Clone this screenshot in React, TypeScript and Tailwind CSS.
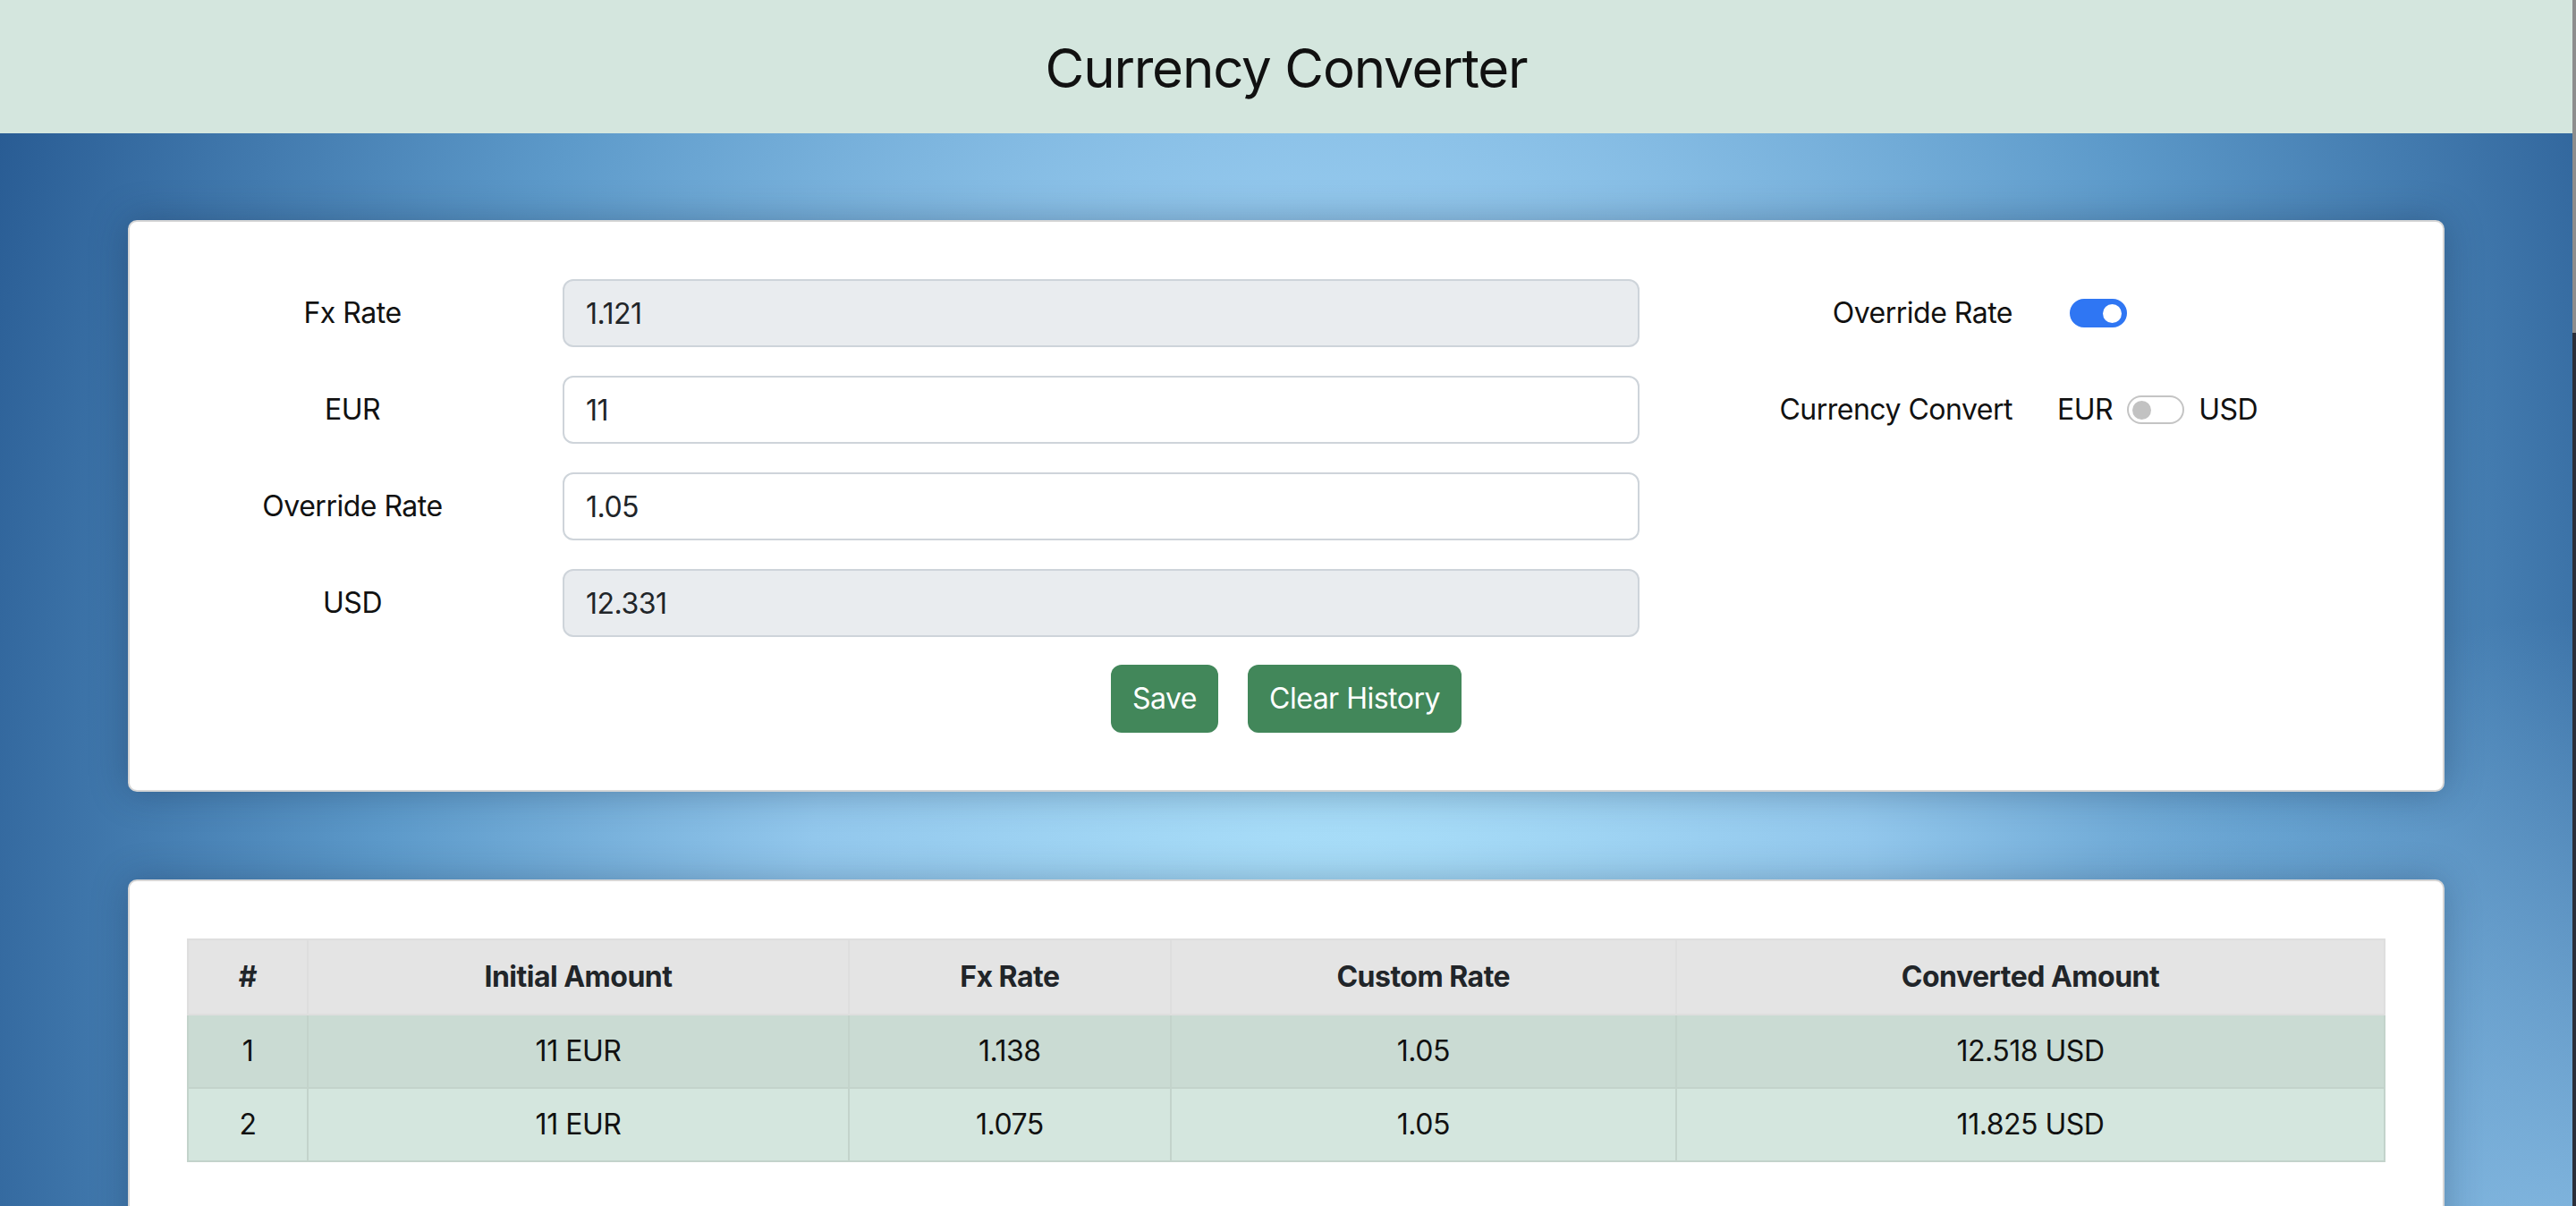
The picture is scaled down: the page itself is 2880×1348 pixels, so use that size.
import { useState } from 'react';

// ─── Data ─────────────────────────────────────────────────────────────────────

interface HistoryRow {
  id: number;
  initial: string;
  fxRate: string;
  customRate: string;
  converted: string;
}

const HISTORY: HistoryRow[] = [
  { id: 1, initial: '11 EUR', fxRate: '1.138', customRate: '1.05', converted: '12.518 USD' },
  { id: 2, initial: '11 EUR', fxRate: '1.075', customRate: '1.05', converted: '11.825 USD' },
];

const COLUMNS = [
  { label: '#', width: 'w-[134px]' },
  { label: 'Initial Amount', width: 'w-[606px]' },
  { label: 'Fx Rate', width: 'w-[360px]' },
  { label: 'Custom Rate', width: 'w-[566px]' },
  { label: 'Converted Amount', width: 'w-[793px]' },
];

const ROW_BG = ['bg-[#cadbd3]', 'bg-[#d4e6de]'];

// ─── Small pieces ─────────────────────────────────────────────────────────────

function FieldRow({
  label,
  value,
  disabled,
}: {
  label: string;
  value: string;
  disabled?: boolean;
}) {
  return (
    <div className="flex items-center h-[76px]">
      <label className="w-[370px] text-center text-[32px] text-[#111]">{label}</label>
      <input
        readOnly
        value={value}
        className={`ml-[50px] w-[1204px] h-[76px] border-2 border-[#ced4da] rounded-[12px] px-[24px] text-[32px] tracking-[-0.5px] text-[#212529] outline-none ${
          disabled ? 'bg-[#e9ecef]' : 'bg-white'
        }`}
      />
    </div>
  );
}

function Switch({ on, onToggle }: { on: boolean; onToggle: () => void }) {
  return (
    <button
      type="button"
      onClick={onToggle}
      className={`w-[64px] h-[32px] rounded-full flex items-center px-[4px] border-2 ${
        on ? 'bg-[#2f76f3] border-[#2f76f3] justify-end' : 'bg-white border-[#c4c4c4] justify-start'
      }`}
    >
      <span
        className={`w-[21px] h-[21px] rounded-full ${on ? 'bg-white' : 'bg-[#c2c2c2]'}`}
      />
    </button>
  );
}

// ─── Main component ───────────────────────────────────────────────────────────

export default function App() {
  const [override, setOverride] = useState(true);
  const [toUsd, setToUsd] = useState(false);

  return (
    <div className="h-screen overflow-hidden flex font-['Inter','Liberation_Sans',sans-serif] tracking-[-0.5px] text-[#212529]">
      <div className="flex-1 flex flex-col">
        <div className="h-[2px] bg-[#6c6c6c]" />
        <header className="h-[149px] shrink-0 bg-[#d4e6de] flex items-center justify-center">
          <h1 className="text-[60px] font-normal text-[#111] tracking-[-1.2px] mt-[3px]">
            Currency Converter
          </h1>
        </header>

        <main className="flex-1 px-[143px] pt-[97px] flex flex-col gap-[98px] bg-[radial-gradient(ellipse_25%_60%_at_100%_100%,rgba(144,196,234,0.95)_0%,rgba(144,196,234,0)_100%),radial-gradient(ellipse_60%_200%_at_52%_75%,#ade2fb_0%,#92c7ec_35%,#5d9aca_62%,#285b93_95%)]">
          {/* Converter card */}
          <section className="bg-white border-2 border-[#d6d6d6] rounded-[10px] shadow-[0_0_40px_rgba(20,40,70,0.35)] p-[64px] flex flex-col gap-[31px]">
            <div className="flex">
              <div className="flex flex-col gap-[32px]">
                <FieldRow label="Fx Rate" value="1.121" disabled />
                <FieldRow label="EUR" value="11" />
                <FieldRow label="Override Rate" value="1.05" />
                <FieldRow label="USD" value="12.331" disabled />
              </div>

              <div className="ml-[64px] flex flex-col gap-[32px]">
                <div className="flex items-center h-[76px]">
                  <span className="w-[353px] text-right text-[32px] text-[#111]">Override Rate</span>
                  <div className="ml-[64px]">
                    <Switch on={override} onToggle={() => setOverride(!override)} />
                  </div>
                </div>
                <div className="flex items-center h-[76px]">
                  <span className="w-[353px] text-right text-[32px] text-[#111]">Currency Convert</span>
                  <div className="ml-[50px] flex items-center gap-[16px] text-[32px] text-[#111]">
                    <span>EUR</span>
                    <Switch on={toUsd} onToggle={() => setToUsd(!toUsd)} />
                    <span>USD</span>
                  </div>
                </div>
              </div>
            </div>

            <div className="flex justify-center gap-[33px]">
              <button className="w-[120px] h-[76px] rounded-[12px] bg-[#42875a] text-white text-[32px]">
                Save
              </button>
              <button className="w-[239px] h-[76px] rounded-[12px] bg-[#42875a] text-white text-[32px]">
                Clear History
              </button>
            </div>
          </section>

          {/* History card */}
          <section className="bg-white border-2 border-[#d6d6d6] rounded-[10px] shadow-[0_0_40px_rgba(20,40,70,0.3)] p-[64px] pb-[200px]">
            <table className="w-full border-collapse text-[32px] leading-[48px] text-center">
              <thead>
                <tr className="bg-[#e4e4e4]">
                  {COLUMNS.map((c) => (
                    <th
                      key={c.label}
                      className={`${c.width} py-[17px] font-bold text-[#212529] border-2 border-[#dedede]`}
                    >
                      {c.label}
                    </th>
                  ))}
                </tr>
              </thead>
              <tbody>
                {HISTORY.map((r, i) => (
                  <tr key={r.id} className={ROW_BG[i % 2]}>
                    {[r.id, r.initial, r.fxRate, r.customRate, r.converted].map((v, j) => (
                      <td key={j} className="py-[16px] text-[#111] border-2 border-[#c3d3cb]">
                        {v}
                      </td>
                    ))}
                  </tr>
                ))}
              </tbody>
            </table>
          </section>
        </main>
      </div>

      {/* Window edge */}
      <div className="w-[4px] flex flex-col">
        <div className="h-[372px] bg-[#8d8d8d]" />
        <div className="flex-1 bg-[#2b2f3a]" />
      </div>
    </div>
  );
}
